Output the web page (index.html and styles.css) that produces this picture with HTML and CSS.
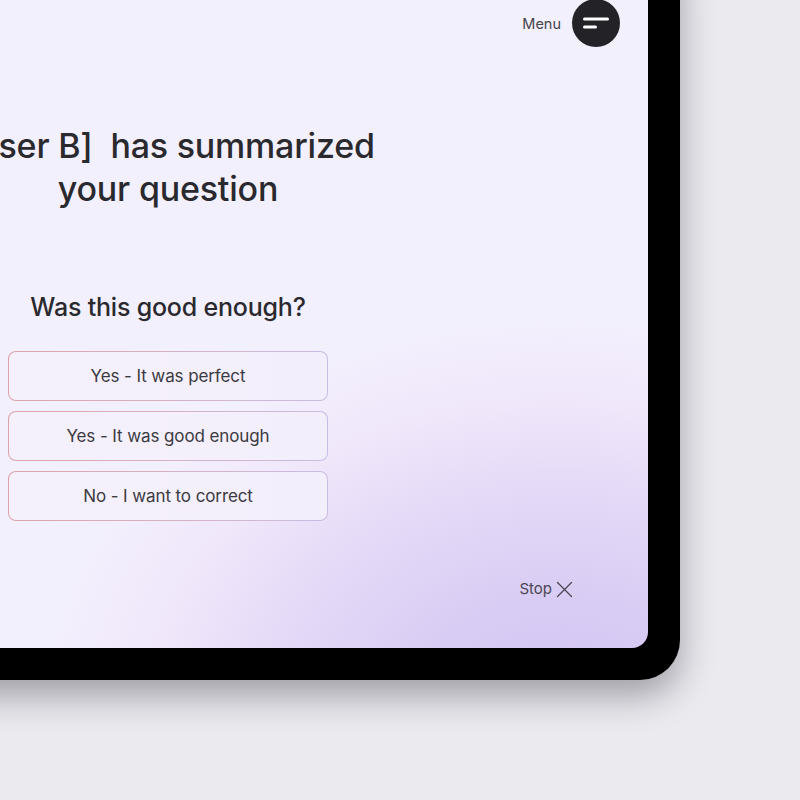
FILE: index.html
```html
<!DOCTYPE html>
<html lang="en">
<head>
<meta charset="utf-8">
<title>Summary</title>
<link rel="stylesheet" href="styles.css">
</head>
<body>
<div class="device">
  <div class="screen">
    <header class="topbar">
      <span class="menu-label">Menu</span>
      <button class="menu-btn" aria-label="Menu">
        <svg width="26" height="14" viewBox="0 0 26 14">
          <line x1="1.5" y1="2" x2="24.5" y2="2" stroke="#fff" stroke-width="3" stroke-linecap="round"/>
          <line x1="1.5" y1="10" x2="12.5" y2="10" stroke="#fff" stroke-width="3" stroke-linecap="round"/>
        </svg>
      </button>
    </header>
    <main class="content">
      <h1 class="headline">[User B]&nbsp; has summarized<br>your question</h1>
      <h2 class="question">Was this good enough?</h2>
      <div class="options">
        <button class="option">Yes - It was perfect</button>
        <button class="option">Yes - It was good enough</button>
        <button class="option">No - I want to correct</button>
      </div>
    </main>
    <footer class="footer">
      <span class="stop">Stop
        <svg width="17" height="17" viewBox="0 0 17 17">
          <path d="M1.5 1.5 L15.5 15.5 M15.5 1.5 L1.5 15.5" stroke="#4a4752" stroke-width="1.3" fill="none" stroke-linecap="round"/>
        </svg>
      </span>
    </footer>
  </div>
</div>
</body>
</html>
```

FILE: styles.css
```css
html, body {
  margin: 0;
  padding: 0;
}
body {
  background: #ebeaef;
  width: 800px;
  height: 800px;
  overflow: hidden;
  font-family: Inter, "Liberation Sans", sans-serif;
}
.device {
  width: 960px;
  margin: -60px 0 0 -344px;
  padding: 32px;
  background: #000;
  border-radius: 40px;
  box-shadow: 0 16px 34px rgba(30, 28, 40, 0.36);
}
.screen {
  height: 676px;
  border-radius: 16px;
  overflow: hidden;
  display: flex;
  flex-direction: column;
  background:
    radial-gradient(ellipse 520px 390px at 872px 735px, #d1c3f1 0%, #d9ccf4 28%, #e4d9f7 55%, rgba(239,229,250,0.85) 78%, rgba(243,240,253,0) 100%),
    #f3f0fd;
}
.topbar {
  display: flex;
  justify-content: flex-end;
  align-items: center;
  gap: 11px;
  padding: 27px 28px 0 0;
}
.menu-label {
  font-size: 14.5px;
  color: #45434b;
}
.menu-btn {
  width: 48px;
  height: 48px;
  border-radius: 50%;
  border: none;
  background: #232226;
  display: flex;
  align-items: center;
  justify-content: center;
  padding: 0;
}
.menu-btn svg {
  display: block;
  margin-top: 1px;
}
.content {
  display: flex;
  flex-direction: column;
  align-items: center;
}
.headline {
  margin: 77px 0 0;
  font-size: 34px;
  line-height: 43px;
  font-weight: 500;
  color: #2a292e;
  text-align: center;
  letter-spacing: -0.2px;
}
.question {
  margin: 81px 0 0;
  font-size: 25px;
  line-height: 32px;
  font-weight: 500;
  color: #2a292e;
  letter-spacing: -0.2px;
}
.options {
  margin-top: 28px;
  display: flex;
  flex-direction: column;
  gap: 10px;
  width: 320px;
}
.option {
  height: 50px;
  border-radius: 8px;
  border: 1.5px solid transparent;
  background:
    linear-gradient(90deg, #f5f1fc, #f3eefb) padding-box,
    linear-gradient(90deg, #dea3a8, #d6b2c2 50%, #c9bde3) border-box;
  font-family: Inter, "Liberation Sans", sans-serif;
  font-size: 17px;
  color: #3b3a41;
  letter-spacing: -0.1px;
}
.footer {
  display: flex;
  justify-content: flex-end;
  margin-top: 58px;
  padding-right: 75px;
}
.stop {
  display: flex;
  align-items: center;
  gap: 4px;
  font-size: 15px;
  line-height: 20px;
  color: #4a4752;
}
.stop svg {
  display: block;
}
```
